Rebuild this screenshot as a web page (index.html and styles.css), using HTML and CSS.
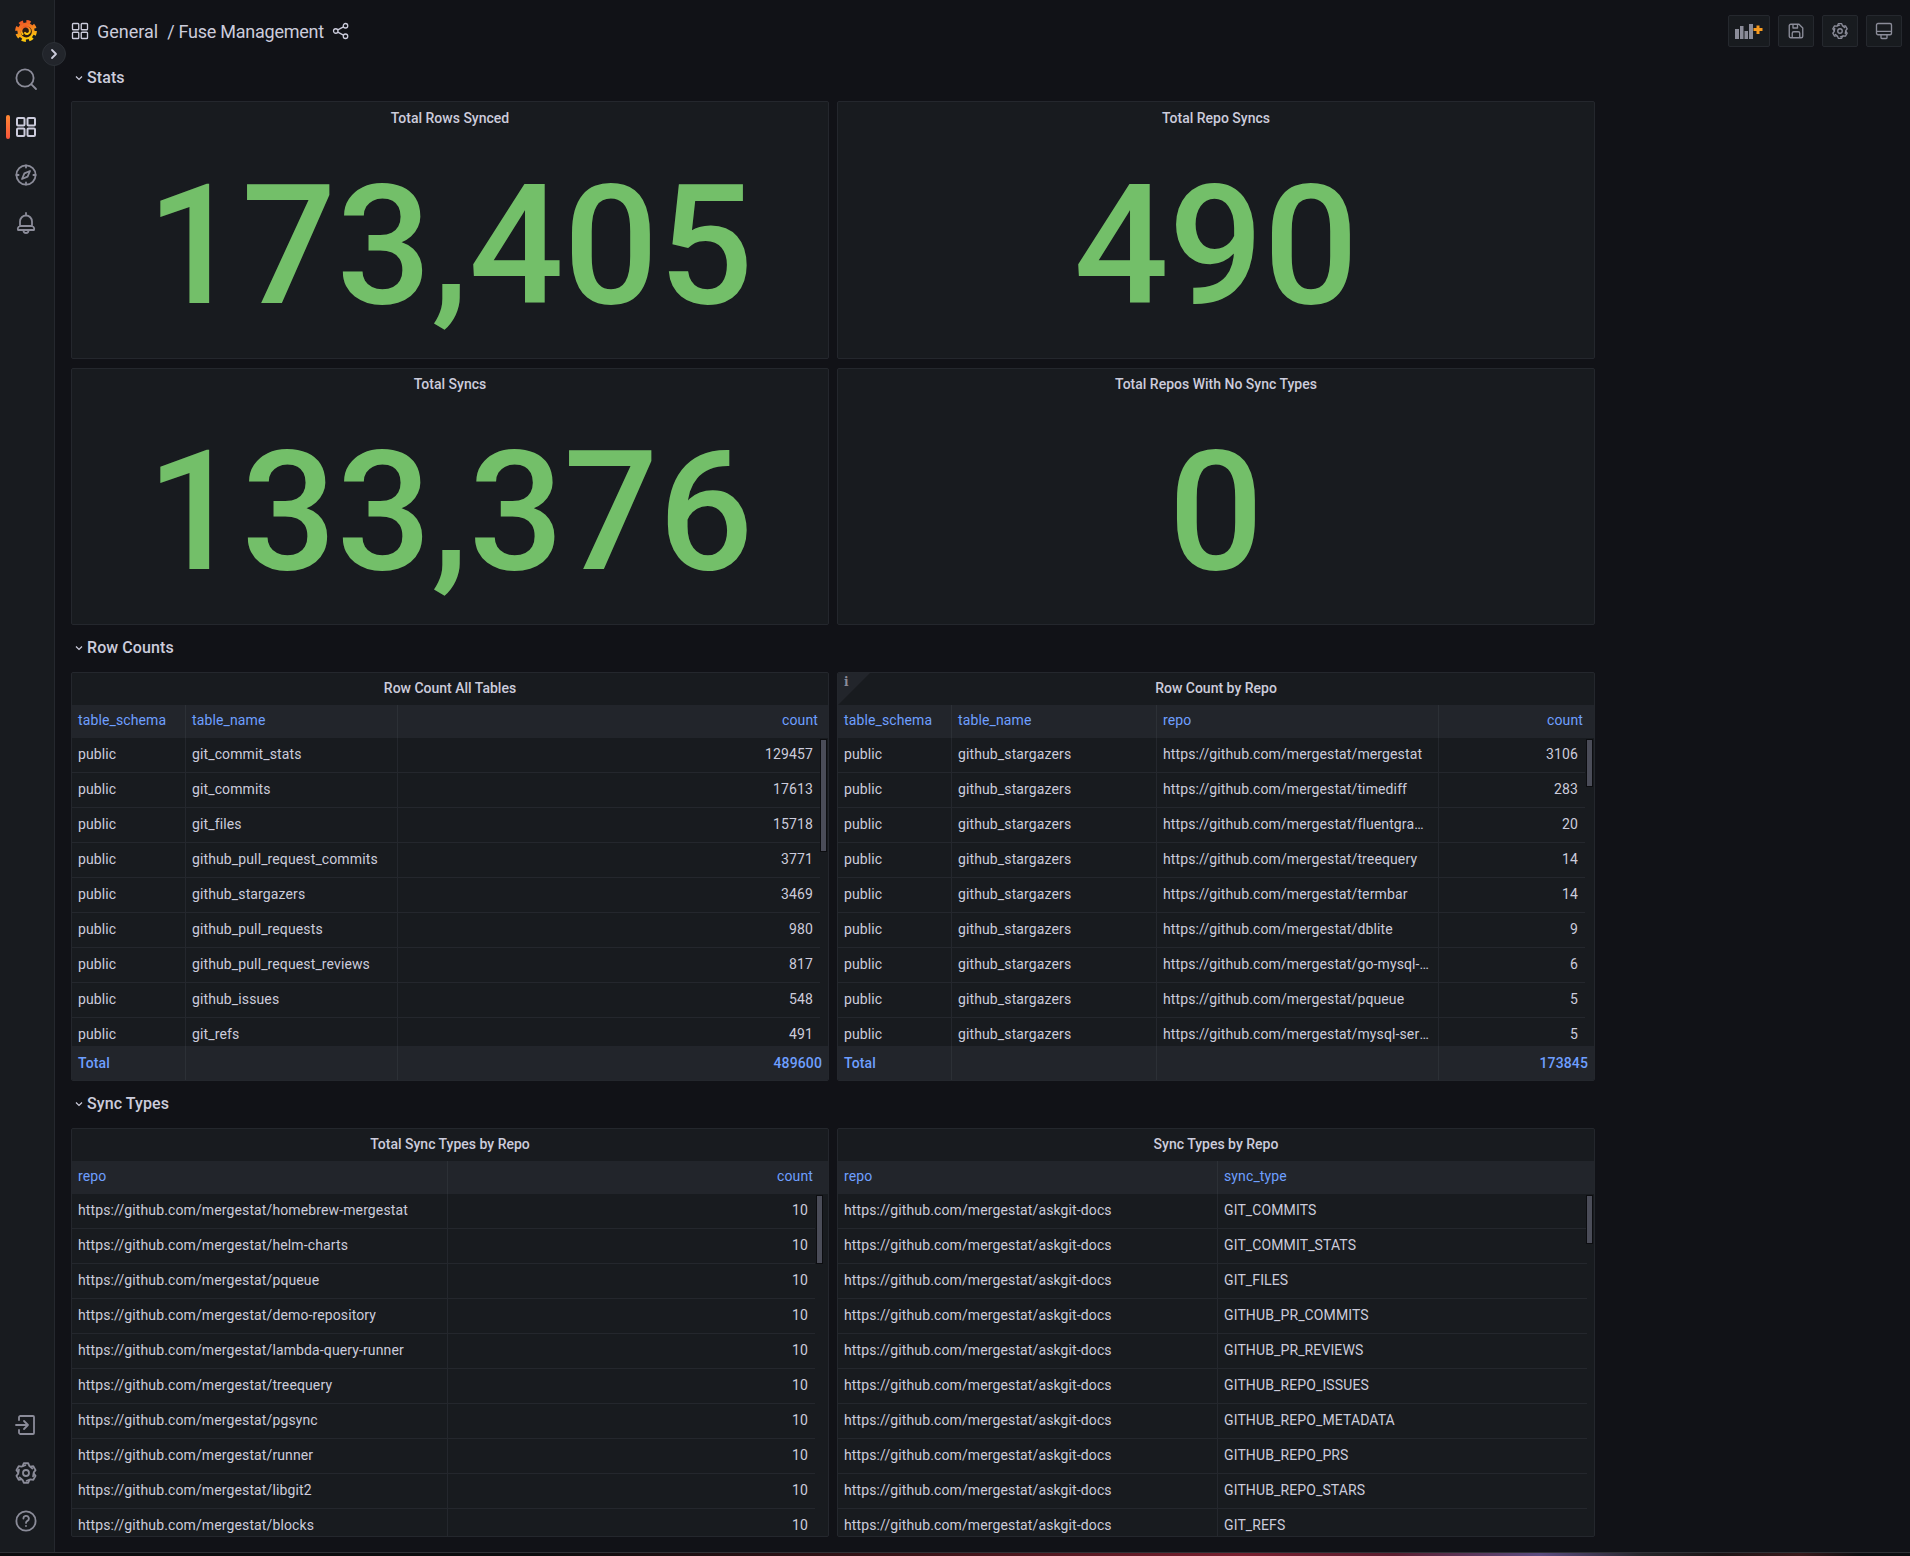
FILE: index.html
```html
<!DOCTYPE html>
<html lang="en">
<head>
    <meta charset="UTF-8">
    <title>Fuse Management</title>
    <link rel="stylesheet" href="styles.css">
</head>
<body>
    <svg class="defs" width="0" height="0">
        <defs>
            <linearGradient id="flame" x1="0" y1="0" x2="0.3" y2="1">
                <stop offset="0" stop-color="#ef4f26"/>
                <stop offset="0.55" stop-color="#f58a1f"/>
                <stop offset="1" stop-color="#fcc70c"/>
            </linearGradient>
            <g id="gear">
                <path d="M8.7 4.93 9.75 2.26H14.25L15.3 4.93 18.39 7.53"/>
                <path d="M8.7 4.93 9.75 2.26H14.25L15.3 4.93 18.39 7.53" transform="rotate(60 12 12)"/>
                <path d="M8.7 4.93 9.75 2.26H14.25L15.3 4.93 18.39 7.53" transform="rotate(120 12 12)"/>
                <path d="M8.7 4.93 9.75 2.26H14.25L15.3 4.93 18.39 7.53" transform="rotate(180 12 12)"/>
                <path d="M8.7 4.93 9.75 2.26H14.25L15.3 4.93 18.39 7.53" transform="rotate(240 12 12)"/>
                <path d="M8.7 4.93 9.75 2.26H14.25L15.3 4.93 18.39 7.53" transform="rotate(300 12 12)"/>
                <circle cx="12" cy="12" r="3"/>
            </g>
            <g id="apps">
                <rect x="3" y="3" width="7.5" height="7.5" rx="1"/>
                <rect x="13.5" y="3" width="7.5" height="7.5" rx="1"/>
                <rect x="3" y="13.5" width="7.5" height="7.5" rx="1"/>
                <rect x="13.5" y="13.5" width="7.5" height="7.5" rx="1"/>
            </g>
        </defs>
    </svg>

    <div class="window">
        <aside class="sidebar">
            <div class="side-group">
                <div class="side-item logo">
                    <svg viewBox="0 0 24 24" width="24" height="24">
                        <circle cx="12" cy="12" r="9.4" fill="none" stroke="url(#flame)" stroke-width="3" stroke-dasharray="4.2 3.2"/>
                        <circle cx="12" cy="12" r="8.6" fill="url(#flame)"/>
                        <circle cx="12.300" cy="12.800" r="5.600" fill="#2a1a12"/>
                        <path d="M8.600 15a4.300 4.300 0 1 1 7.300-2.700 2.700 2.700 0 0 1-4.900 1.500" fill="none" stroke="url(#flame)" stroke-width="2" stroke-linecap="round"/>
                    </svg>
                </div>
                <div class="side-item">
                    <svg class="icon" viewBox="0 0 24 24" width="24" height="24"><circle cx="11" cy="11" r="8.6"/><path d="M17.4 17.4 22 22"/></svg>
                </div>
                <div class="side-item active">
                    <svg class="icon" viewBox="0 0 24 24" width="24" height="24"><use href="#apps"/></svg>
                </div>
                <div class="side-item">
                    <svg class="icon" viewBox="0 0 24 24" width="24" height="24"><circle cx="12" cy="12" r="9.6"/><path d="M12 2.4V4.6M12 19.4v2.2M2.4 12H4.6M19.4 12h2.2M16 8l-2.4 5.6L8 16l2.4-5.6z"/></svg>
                </div>
                <div class="side-item">
                    <svg class="icon" viewBox="0 0 24 24" width="24" height="24"><path d="M6 15V10.500a6 6 0 0 1 12 0V15M4 19a3 3 0 0 1 2-4H18a3 3 0 0 1 2 4zM12 2v2.500M9.500 19v.5a2.500 2.500 0 0 0 5 0V19"/></svg>
                </div>
            </div>
            <div class="side-group">
                <div class="side-item">
                    <svg class="icon" viewBox="0 0 24 24" width="24" height="24"><path d="M5 7V4a2 2 0 0 1 1-1H19a1 1 0 0 1 1 1V20a1 1 0 0 1-1 1H6a2 2 0 0 1-1-1V17M2 12H14M10 8l4 4-4 4"/></svg>
                </div>
                <div class="side-item">
                    <svg class="icon" viewBox="0 0 24 24" width="24" height="24"><use href="#gear"/></svg>
                </div>
                <div class="side-item">
                    <svg class="icon" viewBox="0 0 24 24" width="24" height="24"><circle cx="12" cy="12" r="9.600"/><path d="M9.400 9.500a2.700 2.700 0 1 1 4 2.400c-.9.500-1.400 1-1.400 2M12 16.800v.2"/></svg>
                </div>
            </div>
            <div class="side-toggle">
                <svg viewBox="0 0 12 12" width="12" height="12"><path d="M4 2l4 4-4 4"/></svg>
            </div>
        </aside>

        <main class="main">
            <header class="topbar">
                <svg class="crumb-icon" viewBox="0 0 24 24" width="20" height="20"><use href="#apps"/></svg>
                <span class="crumb">General</span>
                <span class="crumb crumb-sep">/ Fuse Management</span>
                <svg class="share" viewBox="0 0 24 24" width="18" height="18"><circle cx="18" cy="5" r="3"/><circle cx="18" cy="19" r="3"/><circle cx="5" cy="12" r="3"/><path d="M7.700 10.500 15.300 6.500M7.700 13.500l7.600 4"/></svg>
                <div class="toolbar">
                    <button class="tool tool-wide">
                        <svg viewBox="0 0 30 16" width="30" height="16">
                            <path class="bars" d="M1 6h4v10H1zM6 3h3.500v13H6zM10.500 8H14v8h-3.500zM15 1h4v15h-4z"/>
                            <path class="plus" d="M19.500 5h3V2.500h3V5h3v3h-3v3h-3V8h-3z"/>
                        </svg>
                    </button>
                    <button class="tool">
                        <svg class="icon" viewBox="0 0 24 24" width="18" height="18"><path d="M5 3H16L21 8V19a2 2 0 0 1-2 2H5a2 2 0 0 1-2-2V5a2 2 0 0 1 2-2zM8 3V8H14V3M7 21V15a2 2 0 0 1 2-2H15a2 2 0 0 1 2 2V21"/></svg>
                    </button>
                    <button class="tool">
                        <svg class="icon" viewBox="0 0 24 24" width="18" height="18"><use href="#gear"/></svg>
                    </button>
                    <button class="tool">
                        <svg class="icon" viewBox="0 0 24 24" width="18" height="18"><path d="M4 2H20a2 2 0 0 1 2 2V15a2 2 0 0 1-2 2H4a2 2 0 0 1-2-2V4a2 2 0 0 1 2-2zM2 12.500H22M8 17V21a1 1 0 0 0 1 1H15a1 1 0 0 0 1-1V17"/></svg>
                    </button>
                </div>
            </header>

            <div class="row-title first">
                <svg viewBox="0 0 10 10" width="10" height="10"><path d="M2 3.500 5 6.500 8 3.500"/></svg>
                <span>Stats</span>
            </div>
            <div class="grid grid-stats">
                <section class="panel stat stat-top">
                    <h3 class="panel-title">Total Rows Synced</h3>
                    <div class="stat-value">173,405</div>
                </section>
                <section class="panel stat stat-top">
                    <h3 class="panel-title">Total Repo Syncs</h3>
                    <div class="stat-value">490</div>
                </section>
                <section class="panel stat">
                    <h3 class="panel-title">Total Syncs</h3>
                    <div class="stat-value">133,376</div>
                </section>
                <section class="panel stat">
                    <h3 class="panel-title">Total Repos With No Sync Types</h3>
                    <div class="stat-value">0</div>
                </section>
            </div>

            <div class="row-title">
                <svg viewBox="0 0 10 10" width="10" height="10"><path d="M2 3.500 5 6.500 8 3.500"/></svg>
                <span>Row Counts</span>
            </div>
            <div class="grid">
                <section class="panel table-panel cols-tables gutter-a">
                    <h3 class="panel-title">Row Count All Tables</h3>
                    <div class="thead tr"><div class="th">table_schema</div><div class="th">table_name</div><div class="th num">count</div></div>
                    <div class="tbody">
                        <div class="tr"><div class="td">public</div><div class="td">git_commit_stats</div><div class="td num">129457</div></div>
                        <div class="tr"><div class="td">public</div><div class="td">git_commits</div><div class="td num">17613</div></div>
                        <div class="tr"><div class="td">public</div><div class="td">git_files</div><div class="td num">15718</div></div>
                        <div class="tr"><div class="td">public</div><div class="td">github_pull_request_commits</div><div class="td num">3771</div></div>
                        <div class="tr"><div class="td">public</div><div class="td">github_stargazers</div><div class="td num">3469</div></div>
                        <div class="tr"><div class="td">public</div><div class="td">github_pull_requests</div><div class="td num">980</div></div>
                        <div class="tr"><div class="td">public</div><div class="td">github_pull_request_reviews</div><div class="td num">817</div></div>
                        <div class="tr"><div class="td">public</div><div class="td">github_issues</div><div class="td num">548</div></div>
                        <div class="tr"><div class="td">public</div><div class="td">git_refs</div><div class="td num">491</div></div>
                        <div class="scroll-thumb thumb-a"></div>
                    </div>
                    <div class="tfoot tr"><div class="tf">Total</div><div class="tf"></div><div class="tf num">489600</div></div>
                </section>
                <section class="panel table-panel cols-repo gutter-b">
                    <div class="corner"></div>
                    <span class="corner-i">i</span>
                    <h3 class="panel-title">Row Count by Repo</h3>
                    <div class="thead tr"><div class="th">table_schema</div><div class="th">table_name</div><div class="th">repo</div><div class="th num">count</div></div>
                    <div class="tbody">
                        <div class="tr"><div class="td">public</div><div class="td">github_stargazers</div><div class="td">https://github.com/mergestat/mergestat</div><div class="td num">3106</div></div>
                        <div class="tr"><div class="td">public</div><div class="td">github_stargazers</div><div class="td">https://github.com/mergestat/timediff</div><div class="td num">283</div></div>
                        <div class="tr"><div class="td">public</div><div class="td">github_stargazers</div><div class="td">https://github.com/mergestat/fluentgraphql</div><div class="td num">20</div></div>
                        <div class="tr"><div class="td">public</div><div class="td">github_stargazers</div><div class="td">https://github.com/mergestat/treequery</div><div class="td num">14</div></div>
                        <div class="tr"><div class="td">public</div><div class="td">github_stargazers</div><div class="td">https://github.com/mergestat/termbar</div><div class="td num">14</div></div>
                        <div class="tr"><div class="td">public</div><div class="td">github_stargazers</div><div class="td">https://github.com/mergestat/dblite</div><div class="td num">9</div></div>
                        <div class="tr"><div class="td">public</div><div class="td">github_stargazers</div><div class="td">https://github.com/mergestat/go-mysql-server</div><div class="td num">6</div></div>
                        <div class="tr"><div class="td">public</div><div class="td">github_stargazers</div><div class="td">https://github.com/mergestat/pqueue</div><div class="td num">5</div></div>
                        <div class="tr"><div class="td">public</div><div class="td">github_stargazers</div><div class="td">https://github.com/mergestat/mysql-server-go</div><div class="td num">5</div></div>
                        <div class="scroll-thumb thumb-b"></div>
                    </div>
                    <div class="tfoot tr"><div class="tf">Total</div><div class="tf"></div><div class="tf"></div><div class="tf num">173845</div></div>
                </section>
            </div>

            <div class="row-title">
                <svg viewBox="0 0 10 10" width="10" height="10"><path d="M2 3.500 5 6.500 8 3.500"/></svg>
                <span>Sync Types</span>
            </div>
            <div class="grid">
                <section class="panel table-panel cols-total gutter-c">
                    <h3 class="panel-title">Total Sync Types by Repo</h3>
                    <div class="thead tr"><div class="th">repo</div><div class="th num">count</div></div>
                    <div class="tbody">
                        <div class="tr"><div class="td">https://github.com/mergestat/homebrew-mergestat</div><div class="td num">10</div></div>
                        <div class="tr"><div class="td">https://github.com/mergestat/helm-charts</div><div class="td num">10</div></div>
                        <div class="tr"><div class="td">https://github.com/mergestat/pqueue</div><div class="td num">10</div></div>
                        <div class="tr"><div class="td">https://github.com/mergestat/demo-repository</div><div class="td num">10</div></div>
                        <div class="tr"><div class="td">https://github.com/mergestat/lambda-query-runner</div><div class="td num">10</div></div>
                        <div class="tr"><div class="td">https://github.com/mergestat/treequery</div><div class="td num">10</div></div>
                        <div class="tr"><div class="td">https://github.com/mergestat/pgsync</div><div class="td num">10</div></div>
                        <div class="tr"><div class="td">https://github.com/mergestat/runner</div><div class="td num">10</div></div>
                        <div class="tr"><div class="td">https://github.com/mergestat/libgit2</div><div class="td num">10</div></div>
                        <div class="tr"><div class="td">https://github.com/mergestat/blocks</div><div class="td num">10</div></div>
                        <div class="scroll-thumb thumb-c"></div>
                    </div>
                </section>
                <section class="panel table-panel cols-types gutter-d">
                    <h3 class="panel-title">Sync Types by Repo</h3>
                    <div class="thead tr"><div class="th">repo</div><div class="th">sync_type</div></div>
                    <div class="tbody">
                        <div class="tr"><div class="td">https://github.com/mergestat/askgit-docs</div><div class="td">GIT_COMMITS</div></div>
                        <div class="tr"><div class="td">https://github.com/mergestat/askgit-docs</div><div class="td">GIT_COMMIT_STATS</div></div>
                        <div class="tr"><div class="td">https://github.com/mergestat/askgit-docs</div><div class="td">GIT_FILES</div></div>
                        <div class="tr"><div class="td">https://github.com/mergestat/askgit-docs</div><div class="td">GITHUB_PR_COMMITS</div></div>
                        <div class="tr"><div class="td">https://github.com/mergestat/askgit-docs</div><div class="td">GITHUB_PR_REVIEWS</div></div>
                        <div class="tr"><div class="td">https://github.com/mergestat/askgit-docs</div><div class="td">GITHUB_REPO_ISSUES</div></div>
                        <div class="tr"><div class="td">https://github.com/mergestat/askgit-docs</div><div class="td">GITHUB_REPO_METADATA</div></div>
                        <div class="tr"><div class="td">https://github.com/mergestat/askgit-docs</div><div class="td">GITHUB_REPO_PRS</div></div>
                        <div class="tr"><div class="td">https://github.com/mergestat/askgit-docs</div><div class="td">GITHUB_REPO_STARS</div></div>
                        <div class="tr"><div class="td">https://github.com/mergestat/askgit-docs</div><div class="td">GIT_REFS</div></div>
                        <div class="scroll-thumb thumb-d"></div>
                    </div>
                </section>
            </div>
        </main>
    </div>
    <div class="window-edge"></div>
</body>
</html>
```

FILE: styles.css
```css
* {
    box-sizing: border-box;
}
body {
    margin: 0;
    height: 1556px;
    overflow: hidden;
    background-color: #111217;
    color: #ccccdc;
    font-family: Roboto, "Liberation Sans", sans-serif;
    font-size: 14px;
}
.defs {
    position: absolute;
}
.window {
    display: flex;
    height: 1552px;
}
.window-edge {
    height: 4px;
    border-top: 1px solid #2f3136;
    background: linear-gradient(90deg, #0c0c0e 0%, #0c0c0e 28%, #3a1418 48%, #7a2030 65%, #5c1e30 73%, #5c4c80 80.600%, #26262a 86%, #1c1416 90%, #3a1a1c 94.200%, #0c0d10 97.400%);
}

/* sidebar */
.sidebar {
    position: relative;
    flex: none;
    width: 55px;
    display: flex;
    flex-direction: column;
    justify-content: space-between;
    padding: 7px 0 7px;
    background-color: #181b1f;
    border-right: 1px solid #25282e;
}
.side-item {
    position: relative;
    width: 52px;
    height: 48px;
    display: flex;
    align-items: center;
    justify-content: center;
}
.icon {
    fill: none;
    stroke: #8b8c99;
    stroke-width: 1.8;
    stroke-linecap: round;
    stroke-linejoin: round;
}
.side-item.active .icon {
    stroke: #ccccdc;
    stroke-width: 2;
}
.side-item.active::before {
    content: "";
    position: absolute;
    left: 6px;
    top: 12px;
    width: 4px;
    height: 24px;
    border-radius: 2px;
    background: linear-gradient(180deg, #ff8833, #f5543c);
}
.side-toggle {
    position: absolute;
    left: 42px;
    top: 42px;
    width: 24px;
    height: 24px;
    display: flex;
    align-items: center;
    justify-content: center;
    border-radius: 50%;
    background-color: #22252b;
    border: 1px solid #2c3036;
}
.side-toggle svg {
    fill: none;
    stroke: #ccccdc;
    stroke-width: 1.8;
    stroke-linecap: round;
    stroke-linejoin: round;
}

/* top bar */
.main {
    flex: 1;
    min-width: 0;
    padding-left: 16px;
}
.topbar {
    display: flex;
    align-items: center;
    height: 62px;
    padding-right: 8px;
}
.crumb-icon {
    margin-left: -1px;
    margin-right: 7px;
    fill: none;
    stroke: #ccccdc;
    stroke-width: 1.6;
}
.crumb {
    font-size: 18px;
    color: #ccccdc;
}
.crumb-sep {
    margin-left: 9px;
    letter-spacing: -0.25px;
}
.share {
    margin-left: 8px;
    fill: none;
    stroke: #ccccdc;
    stroke-width: 1.7;
}
.toolbar {
    display: flex;
    gap: 8px;
    margin-left: auto;
}
.tool {
    width: 36px;
    height: 32px;
    padding: 0;
    display: flex;
    align-items: center;
    justify-content: center;
    background-color: #181b1f;
    border: 1px solid #25282e;
    border-radius: 2px;
}
.tool-wide {
    width: 42px;
}
.bars {
    fill: #8b8c99;
}
.plus {
    fill: #f79a1e;
}

/* dashboard rows */
.row-title {
    display: flex;
    align-items: center;
    height: 39px;
    margin-top: 8px;
    padding-left: 3px;
    padding-bottom: 10px;
    font-size: 16px;
    font-weight: 500;
    letter-spacing: 0.08px;
}
.row-title.first {
    margin-top: 0;
    padding-bottom: 8px;
}
.row-title svg {
    margin-right: 3px;
    fill: none;
    stroke: #ccccdc;
    stroke-width: 1.2;
}
.grid {
    display: grid;
    grid-template-columns: 758px 758px;
    gap: 10px 8px;
    width: 1524px;
}
.grid-stats {
    row-gap: 9px;
}

/* panels */
.panel {
    position: relative;
    display: flex;
    flex-direction: column;
    overflow: hidden;
    background-color: #181b1f;
    border: 1px solid #24272d;
    border-radius: 2px;
}
.panel-title {
    flex: none;
    height: 32px;
    margin: 0;
    font-size: 14px;
    font-weight: 500;
    line-height: 30px;
    text-align: center;
    color: #ccccdc;
}
.stat {
    height: 257px;
}
.stat-top {
    height: 258px;
}
.stat-top .panel-title {
    line-height: 32px;
}
.stat-value {
    flex: 1;
    display: flex;
    align-items: center;
    justify-content: center;
    font-size: 167px;
    font-weight: 500;
    line-height: 1;
    color: #73bf69;
}
.corner {
    position: absolute;
    top: 0;
    left: 0;
    border-style: solid;
    border-width: 32px 32px 0 0;
    border-color: #22252b transparent transparent transparent;
}
.corner-i {
    position: absolute;
    top: 2px;
    left: 6px;
    font-family: "DejaVu Serif", serif;
    font-size: 12px;
    font-weight: 700;
    color: #8b8c99;
}

/* tables */
.table-panel {
    height: 409px;
}
.tr {
    display: grid;
}
.cols-tables .tr {
    grid-template-columns: 114px 212px 1fr;
}
.cols-repo .tr {
    grid-template-columns: 114px 205px 282px 1fr;
}
.cols-total .tr {
    grid-template-columns: 376px 1fr;
}
.cols-types .tr {
    grid-template-columns: 380px 1fr;
}
.gutter-a {
    --gutter: 8px;
}
.gutter-b {
    --gutter: 9px;
}
.gutter-c {
    --gutter: 13px;
}
.gutter-d {
    --gutter: 7px;
}
.th, .td, .tf {
    min-width: 0;
    padding: 0 7px 0 6px;
    overflow: hidden;
    white-space: nowrap;
    text-overflow: ellipsis;
    letter-spacing: 0.12px;
    border-right: 1px solid #24272d;
}
.th:last-child, .td:last-child, .tf:last-child {
    border-right: none;
}
.num {
    text-align: right;
}
.thead {
    flex: none;
    height: 33px;
    line-height: 31px;
    color: #6e9fff;
    background-color: #22252b;
}
.thead .th {
    border-right-color: #2c3036;
}
.thead .num {
    padding-right: calc(var(--gutter) + 2px);
}
.tbody {
    position: relative;
    flex: 1;
    min-height: 0;
    overflow: hidden;
    padding-right: var(--gutter);
}
.tbody .tr {
    height: 35px;
    line-height: 32px;
    border-bottom: 1px solid #24272d;
}
.tfoot {
    flex: none;
    height: 34px;
    line-height: 35px;
    font-weight: 500;
    color: #6e9fff;
    background-color: #22252b;
}
.tfoot .tf {
    padding-right: 6px;
    border-right-color: #2c3036;
}

/* scrollbar thumbs sit over the rows */
.scroll-thumb {
    position: absolute;
    top: 1px;
    right: 1px;
    width: 7px;
    background-color: #4a4c58;
    border: 1px solid #0c0d10;
}
.thumb-a {
    height: 113px;
}
.thumb-b {
    height: 48px;
}
.thumb-c {
    right: 5px;
    height: 69px;
}
.thumb-d {
    height: 49px;
}
```
